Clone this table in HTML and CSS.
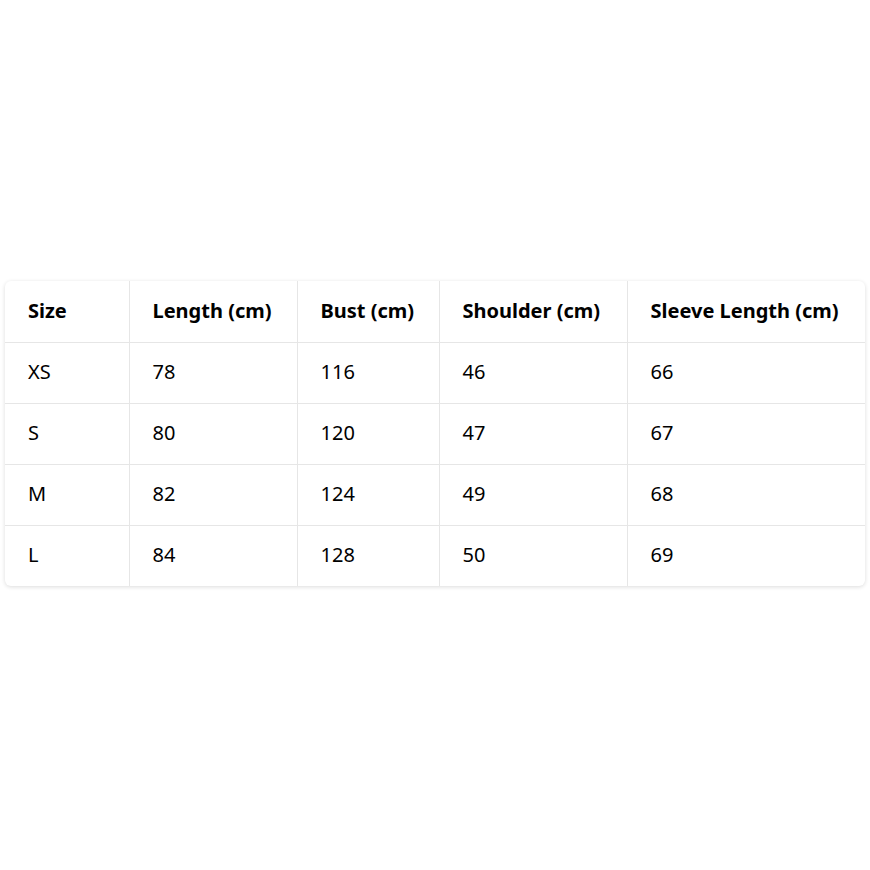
FILE: index.html
```html
<!DOCTYPE html>
<html lang="en">
<head>
<meta charset="utf-8">
<title>Size Chart</title>
<link rel="stylesheet" href="styles.css">
</head>
<body>
<main class="page">
  <div class="card">
    <table class="size-table">
      <colgroup>
        <col class="c1"><col class="c2"><col class="c3"><col class="c4"><col class="c5">
      </colgroup>
      <thead>
        <tr><th>Size</th><th>Length (cm)</th><th>Bust (cm)</th><th>Shoulder (cm)</th><th>Sleeve Length (cm)</th></tr>
      </thead>
      <tbody>
        <tr><td>XS</td><td>78</td><td>116</td><td>46</td><td>66</td></tr>
        <tr><td>S</td><td>80</td><td>120</td><td>47</td><td>67</td></tr>
        <tr><td>M</td><td>82</td><td>124</td><td>49</td><td>68</td></tr>
        <tr><td>L</td><td>84</td><td>128</td><td>50</td><td>69</td></tr>
      </tbody>
    </table>
  </div>
</main>
</body>
</html>
```

FILE: styles.css
```css
html, body {
  margin: 0;
  padding: 0;
  background: #ffffff;
}

.page {
  min-height: 870px;
  display: flex;
  align-items: center;
  justify-content: center;
  padding: 0 5px;
  box-sizing: border-box;
  font-family: "Noto Sans", "Open Sans", "DejaVu Sans", sans-serif;
  color: #000;
}

.card {
  width: 860px;
  background: #fff;
  border-radius: 6px;
  box-shadow: 0 1px 4px rgba(0, 0, 0, 0.14);
  overflow: hidden;
  margin-top: -3px;
}

.size-table {
  width: 100%;
  border-collapse: collapse;
  table-layout: fixed;
  font-size: 20px;
}

.c1 { width: 124px; }
.c2 { width: 168px; }
.c3 { width: 142px; }
.c4 { width: 188px; }
.c5 { width: 238px; }

.size-table th,
.size-table td {
  height: 61px;
  padding: 0 0 2px 23px;
  text-align: left;
  vertical-align: middle;
  border-bottom: 1px solid #e6e6e6;
  border-left: 1px solid #e6e6e6;
  white-space: nowrap;
  box-sizing: border-box;
}

.size-table th:first-child,
.size-table td:first-child {
  border-left: none;
}

.size-table tbody tr:last-child td {
  border-bottom: none;
}

.size-table th {
  font-weight: 700;
}

.size-table td {
  font-weight: 400;
}
```
